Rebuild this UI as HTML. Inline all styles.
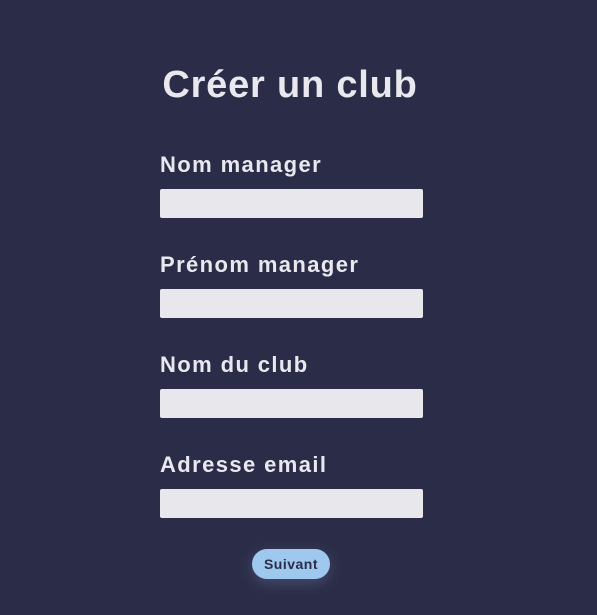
<!DOCTYPE html>
<html><head><style>
body{margin:0;width:597px;height:615px;background:#2b2d48;font-family:"Liberation Sans",sans-serif;position:relative;overflow:hidden}
h1{position:absolute;top:62px;left:0;width:580px;text-align:center;margin:0;color:#e8e8ee;font-size:38px;font-weight:bold;line-height:46px;letter-spacing:0.8px}
.l{position:absolute;left:160px;color:#e8e8ee;font-size:22px;font-weight:bold;line-height:26px;letter-spacing:1.4px}
.i{position:absolute;left:160px;width:263px;height:29px;background:#e8e8ec;border-radius:2px}
.b{position:absolute;left:252px;top:549px;width:78px;height:30px;border-radius:15px;background:#9ec8ee;color:#2b2d48;font-size:14px;font-weight:bold;text-align:center;line-height:30px;letter-spacing:0.5px;box-shadow:0 4px 14px rgba(150,170,220,.25)}
</style></head><body>
<h1>Créer un club</h1>
<div class="l" style="top:152px">Nom manager</div><div class="i" style="top:189px"></div>
<div class="l" style="top:252px">Prénom manager</div><div class="i" style="top:289px"></div>
<div class="l" style="top:352px">Nom du club</div><div class="i" style="top:389px"></div>
<div class="l" style="top:452px">Adresse email</div><div class="i" style="top:489px"></div>
<div class="b">Suivant</div>
</body></html>
